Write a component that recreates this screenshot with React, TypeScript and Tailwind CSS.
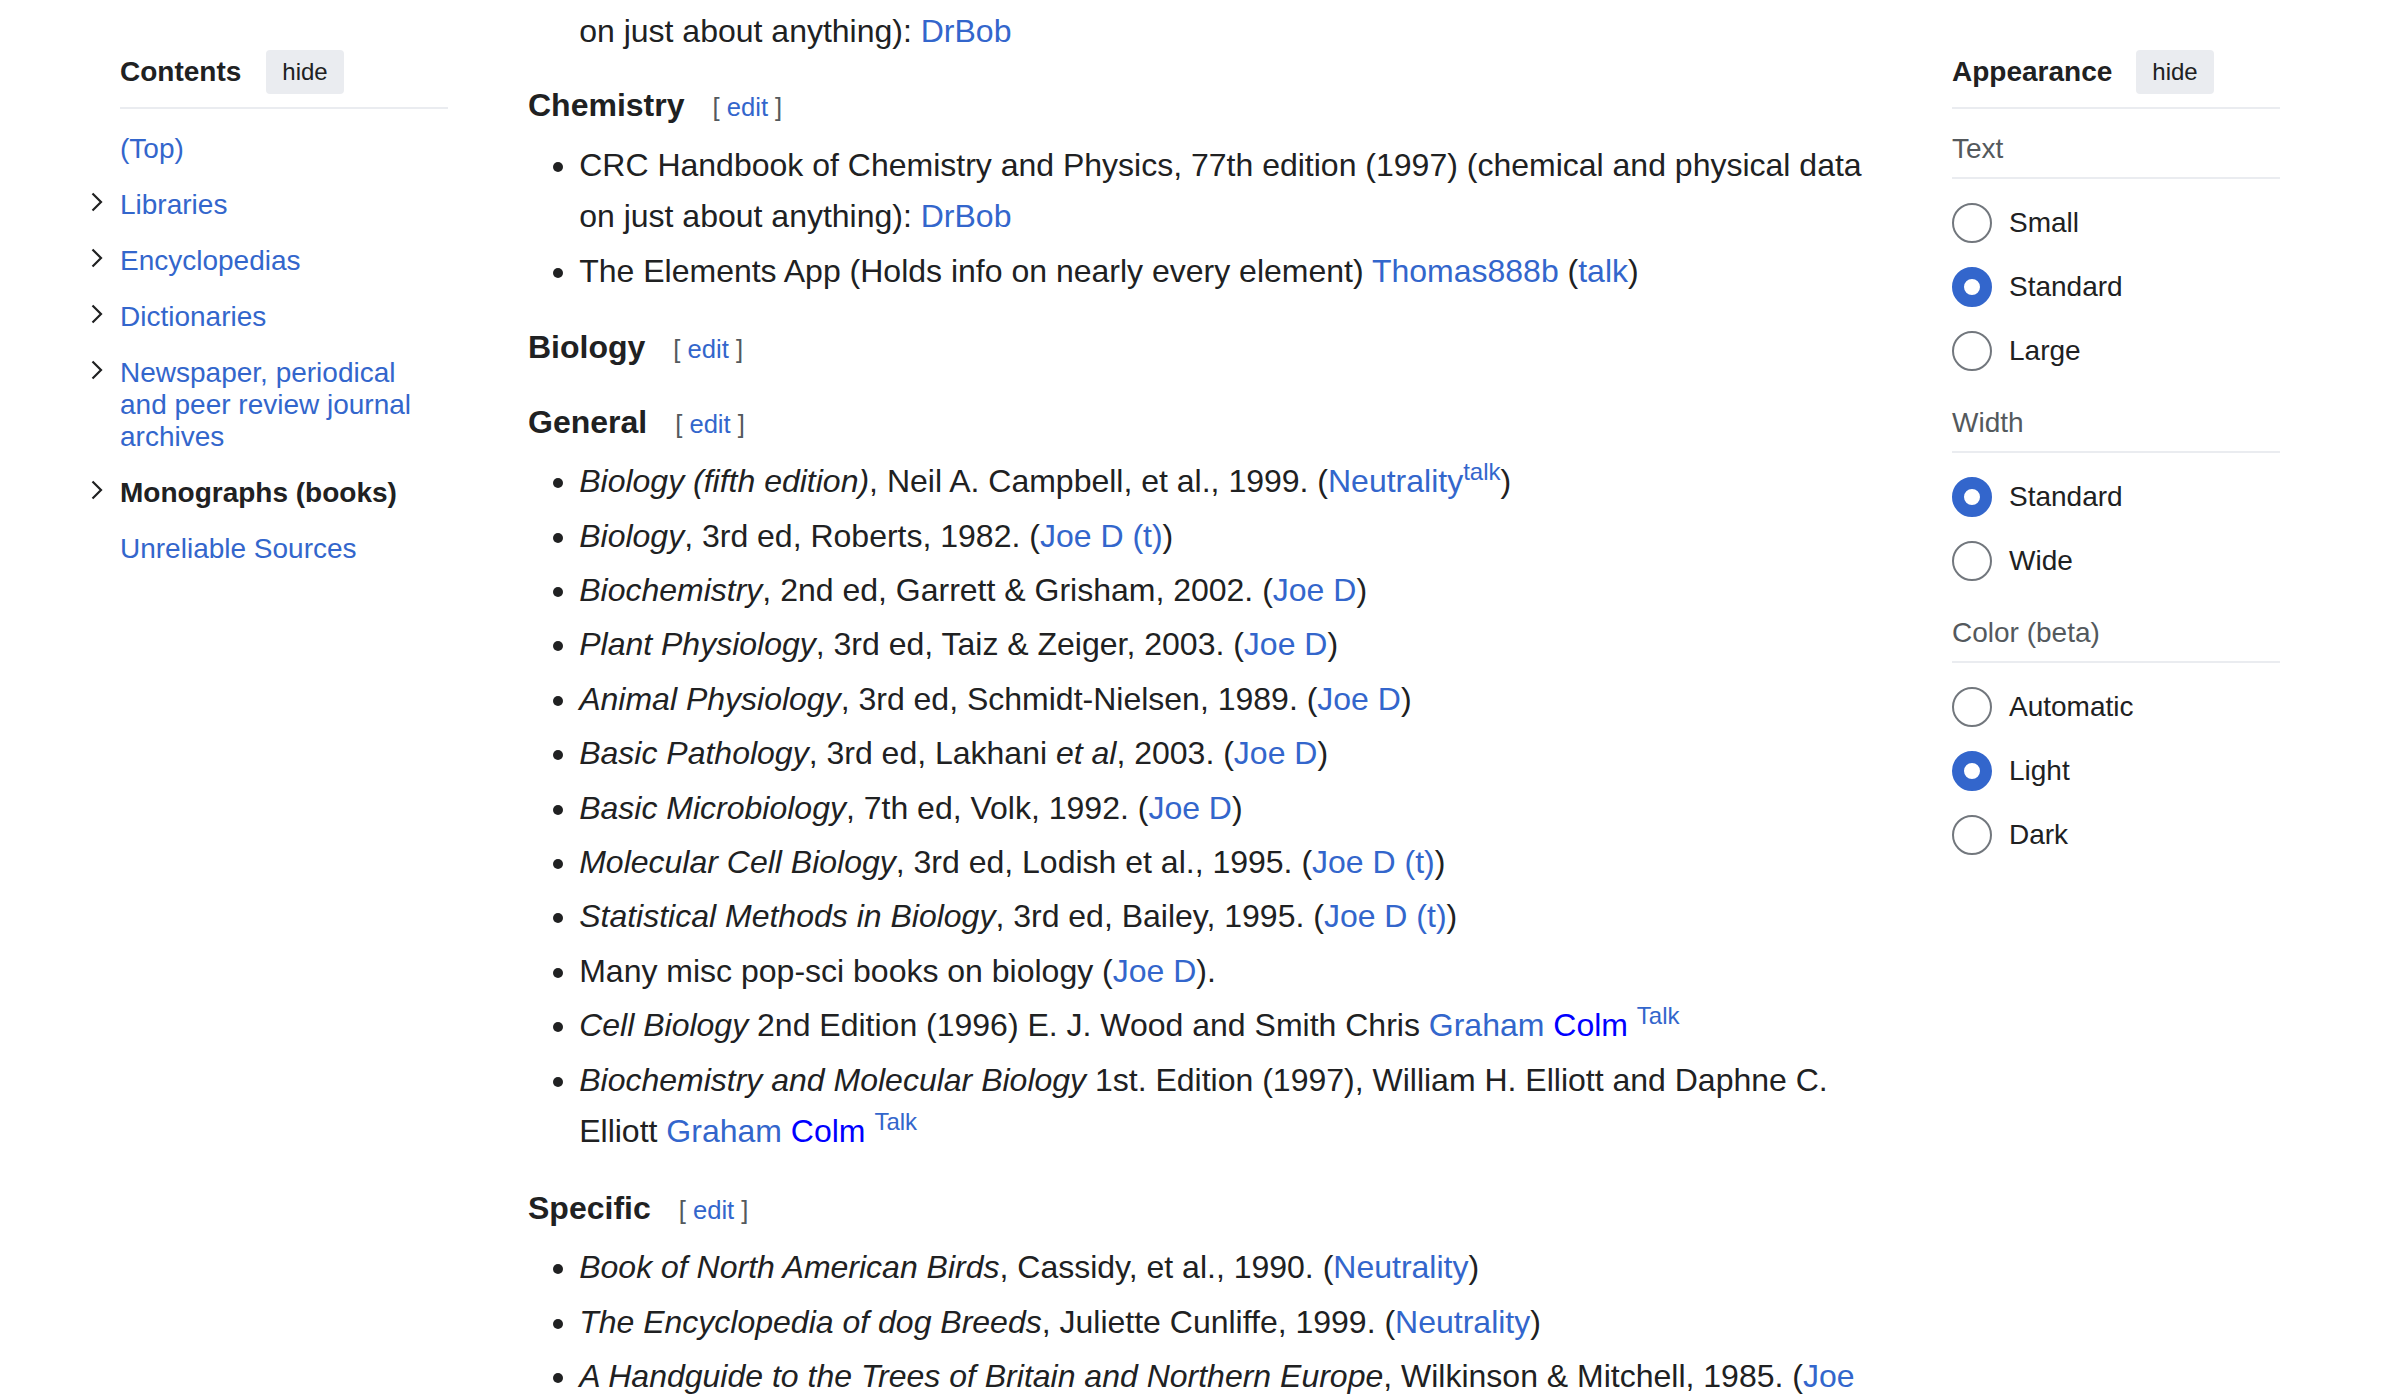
import React from 'react'

const FONT = "font-['Liberation_Sans',Arial,Helvetica,sans-serif]"

function L({ children }: { children: React.ReactNode }) {
  return <span className="text-[#3366cc]">{children}</span>
}

function Edit() {
  return (
    <span className="ml-[28px] text-[25.6px] font-normal text-[#54595d]">
      [ <L>edit</L> ]
    </span>
  )
}

function Heading({ title, mt = 'mt-[25.6px]' }: { title: string; mt?: string }) {
  return (
    <h3 className={`${mt} mb-[6.5px] text-[32px] font-bold leading-[51.2px]`}>
      {title}
      <Edit />
    </h3>
  )
}

function Chevron() {
  return (
    <svg width="12" height="20" viewBox="0 0 12 20" className="ml-[1px] mb-[6px]">
      <path d="M1.5 1.5 L10 10 L1.5 18.5" fill="none" stroke="#202122" strokeWidth="2.2" />
    </svg>
  )
}

const toc: { label: string; chevron: boolean; active?: boolean }[] = [
  { label: '(Top)', chevron: false },
  { label: 'Libraries', chevron: true },
  { label: 'Encyclopedias', chevron: true },
  { label: 'Dictionaries', chevron: true },
  { label: 'Newspaper, periodical and peer review journal archives', chevron: true },
  { label: 'Monographs (books)', chevron: true, active: true },
  { label: 'Unreliable Sources', chevron: false },
]

function Radio({ label, checked }: { label: string; checked?: boolean }) {
  return (
    <div className="flex items-center gap-[17px] h-[40px]">
      <span
        className={
          checked
            ? 'w-[40px] h-[40px] rounded-full border-[12px] border-[#3366cc] bg-white shrink-0'
            : 'w-[40px] h-[40px] rounded-full border-2 border-[#72777d] bg-white shrink-0'
        }
      />
      <span className="text-[28px] leading-[32px]">{label}</span>
    </div>
  )
}

function Group({ title, options, first }: { title: string; options: { label: string; checked?: boolean }[]; first?: boolean }) {
  return (
    <div className={first ? 'mt-[24px]' : 'mt-[36px]'}>
      <div className="text-[28px] leading-[32px] text-[#54595d]">{title}</div>
      <div className="mt-[12px] h-[2px] bg-[#eaecf0]" />
      <div className="mt-[24px] flex flex-col gap-[24px]">
        {options.map(o => (
          <Radio key={o.label} label={o.label} checked={o.checked} />
        ))}
      </div>
    </div>
  )
}

export default function App() {
  return (
    <div className={`h-[1398px] w-[2400px] overflow-hidden bg-white text-[#202122] ${FONT}`}>
      <div className="flex pl-[90px]">
        {/* table of contents */}
        <nav className="w-[358px] shrink-0">
          <div className="ml-[30px] mt-[50px] flex items-center gap-[25px] h-[44px]">
            <span className="text-[28px] font-bold">Contents</span>
            <span className="h-[44px] px-[16px] rounded-[4px] bg-[#eaecf0] text-[24px] flex items-center">hide</span>
          </div>
          <div className="ml-[30px] mt-[13px] h-[2px] bg-[#eaecf0]" />
          <ul className="mt-[12px]">
            {toc.map(item => (
              <li key={item.label} className="grid grid-cols-[30px_1fr] py-[12px] text-[28px] leading-[32px]">
                <div className="h-[32px] flex items-center">{item.chevron && <Chevron />}</div>
                <span className={item.active ? 'font-bold text-[#202122]' : 'text-[#3366cc]'}>{item.label}</span>
              </li>
            ))}
          </ul>
        </nav>

        {/* article */}
        <main className="ml-[80px] w-[1352px] shrink-0 text-[32px] leading-[51.2px]">
          <p className="pt-[6px] pl-[51.2px] mb-[3.2px]">
            on just about anything): <L>DrBob</L>
          </p>

          <Heading title="Chemistry" mt="mt-[23px]" />
          <ul className="list-disc pl-[51.2px] marker:text-[#202122]">
            <li className="mb-[3.2px]">
              CRC Handbook of Chemistry and Physics, 77th edition (1997) (chemical and physical data on just about anything): <L>DrBob</L>
            </li>
            <li className="mb-[3.2px]">
              The Elements App (Holds info on nearly every element) <L>Thomas888b</L> (<L>talk</L>)
            </li>
          </ul>

          <Heading title="Biology" />
          <Heading title="General" mt="mt-[21px]" />
          <ul className="list-disc pl-[51.2px]">
            <li className="mb-[3.2px]">
              <i>Biology (fifth edition)</i>, Neil A. Campbell, et al., 1999. (<L>Neutrality</L><sup className="text-[#3366cc]">talk</sup>)
            </li>
            <li className="mb-[3.2px]">
              <i>Biology</i>, 3rd ed, Roberts, 1982. (<L>Joe D (t)</L>)
            </li>
            <li className="mb-[3.2px]">
              <i>Biochemistry</i>, 2nd ed, Garrett &amp; Grisham, 2002. (<L>Joe D</L>)
            </li>
            <li className="mb-[3.2px]">
              <i>Plant Physiology</i>, 3rd ed, Taiz &amp; Zeiger, 2003. (<L>Joe D</L>)
            </li>
            <li className="mb-[3.2px]">
              <i>Animal Physiology</i>, 3rd ed, Schmidt-Nielsen, 1989. (<L>Joe D</L>)
            </li>
            <li className="mb-[3.2px]">
              <i>Basic Pathology</i>, 3rd ed, Lakhani <i>et al</i>, 2003. (<L>Joe D</L>)
            </li>
            <li className="mb-[3.2px]">
              <i>Basic Microbiology</i>, 7th ed, Volk, 1992. (<L>Joe D</L>)
            </li>
            <li className="mb-[3.2px]">
              <i>Molecular Cell Biology</i>, 3rd ed, Lodish et al., 1995. (<L>Joe D (t)</L>)
            </li>
            <li className="mb-[3.2px]">
              <i>Statistical Methods in Biology</i>, 3rd ed, Bailey, 1995. (<L>Joe D (t)</L>)
            </li>
            <li className="mb-[3.2px]">
              Many misc pop-sci books on biology (<L>Joe D</L>).
            </li>
            <li className="mb-[3.2px]">
              <i>Cell Biology</i> 2nd Edition (1996) E. J. Wood and Smith Chris <L>Graham</L>{' '}
              <span className="text-[#0000ff]">Colm</span> <sup className="text-[#3366cc]">Talk</sup>
            </li>
            <li className="mb-[3.2px]">
              <i>Biochemistry and Molecular Biology</i> 1st. Edition (1997), William H. Elliott and Daphne C. Elliott{' '}
              <L>Graham</L> <span className="text-[#0000ff]">Colm</span> <sup className="text-[#3366cc]">Talk</sup>
            </li>
          </ul>

          <Heading title="Specific" />
          <ul className="list-disc pl-[51.2px]">
            <li className="mb-[3.2px]">
              <i>Book of North American Birds</i>, Cassidy, et al., 1990. (<L>Neutrality</L>)
            </li>
            <li className="mb-[3.2px]">
              <i>The Encyclopedia of dog Breeds</i>, Juliette Cunliffe, 1999. (<L>Neutrality</L>)
            </li>
            <li className="mb-[3.2px]">
              <i>A Handguide to the Trees of Britain and Northern Europe</i>, Wilkinson &amp; Mitchell, 1985. (<L>Joe D</L>)
            </li>
          </ul>
        </main>

        {/* appearance */}
        <aside className="ml-[72px] w-[328px] shrink-0">
          <div className="mt-[50px] flex items-center gap-[24px] h-[44px]">
            <span className="text-[28px] font-bold">Appearance</span>
            <span className="h-[44px] px-[16px] rounded-[4px] bg-[#eaecf0] text-[24px] flex items-center">hide</span>
          </div>
          <div className="mt-[13px] h-[2px] bg-[#eaecf0]" />
          <Group
            first
            title="Text"
            options={[{ label: 'Small' }, { label: 'Standard', checked: true }, { label: 'Large' }]}
          />
          <Group title="Width" options={[{ label: 'Standard', checked: true }, { label: 'Wide' }]} />
          <Group
            title="Color (beta)"
            options={[{ label: 'Automatic' }, { label: 'Light', checked: true }, { label: 'Dark' }]}
          />
        </aside>
      </div>
    </div>
  )
}
